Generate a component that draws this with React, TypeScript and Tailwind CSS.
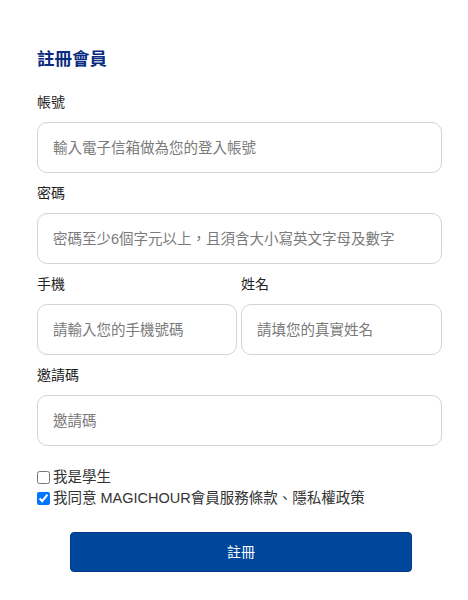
const fontStack = "font-['Liberation_Sans','Noto_Sans_CJK_TC',sans-serif]"

type FieldProps = {
  label: string
  placeholder: string
  className?: string
  type?: string
}

function Field({ label, placeholder, className = "", type = "text" }: FieldProps) {
  return (
    <div className={`flex flex-col ${className}`}>
      <label className="text-[14px] leading-[20px] text-[#222]">{label}</label>
      <input
        type={type}
        placeholder={placeholder}
        className="mt-[10px] h-[51px] w-full rounded-[10px] border border-[#d3d3d3] bg-white px-[15px] text-[14.5px] text-[#333] outline-none placeholder:text-[#7a7a7a]"
      />
    </div>
  )
}

export default function App() {
  return (
    <div className={`min-h-[600px] bg-white ${fontStack}`}>
      <form className="ml-[37px] w-[405px] pt-[45px]">
        <h2 className="text-[17.5px] font-bold leading-[28px] text-[#0b2b80]">註冊會員</h2>

        <div className="mt-[19px] flex flex-col gap-[10px]">
          <Field label="帳號" placeholder="輸入電子信箱做為您的登入帳號" />
          <Field label="密碼" type="password" placeholder="密碼至少6個字元以上，且須含大小寫英文字母及數字" />
          <div className="flex gap-[4px]">
            <Field label="手機" placeholder="請輸入您的手機號碼" className="w-[201px]" />
            <Field label="姓名" placeholder="請填您的真實姓名" className="w-[202px]" />
          </div>
          <Field label="邀請碼" placeholder="邀請碼" />
        </div>

        <div className="mt-[21px] flex flex-col text-[14.5px] leading-[21px] text-[#333]">
          <label className="flex items-center gap-[3px]">
            <input type="checkbox" className="h-[13px] w-[13px]" />
            <span>我是學生</span>
          </label>
          <label className="flex items-center gap-[3px]">
            <input type="checkbox" defaultChecked className="h-[13px] w-[13px]" />
            <span>我同意 MAGICHOUR會員服務條款、隱私權政策</span>
          </label>
        </div>

        <button
          type="button"
          className="ml-[33px] mt-[23px] h-[40px] w-[342px] rounded-[4px] border border-[#003a88] bg-[#00469b] text-[14px] text-white"
        >
          註冊
        </button>
      </form>
    </div>
  )
}
